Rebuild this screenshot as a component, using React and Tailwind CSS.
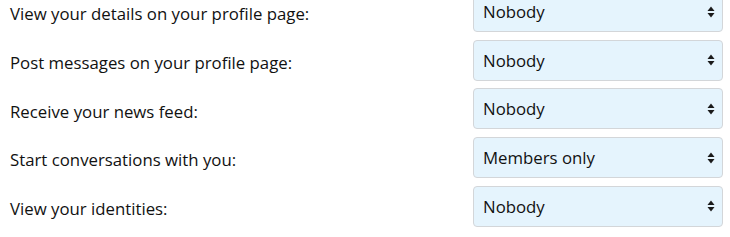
import { useState } from "react";

const rows = [
  { label: "View your details on your profile page:", value: "Nobody" },
  { label: "Post messages on your profile page:", value: "Nobody" },
  { label: "Receive your news feed:", value: "Nobody" },
  { label: "Start conversations with you:", value: "Members only" },
  { label: "View your identities:", value: "Nobody" },
];

const options = ["Everyone", "Members only", "Followed members", "Nobody"];

const PrivacyRow = ({ label, initial }) => {
  const [value, setValue] = useState(initial);

  return (
    <div className="flex items-center justify-between">
      <label className="pt-[5px] text-[16.8px] text-[#111]">{label}</label>
      <div className="relative w-[250px]">
        <select
          value={value}
          onChange={(e) => setValue(e.target.value)}
          className="h-[41px] w-full appearance-none rounded-[4px] border border-[#d3d6d9] bg-[#e5f4fd] pl-[9px] pr-6 text-[16.8px] text-[#111] outline-none"
        >
          {options.map((o) => (
            <option key={o}>{o}</option>
          ))}
        </select>
        <svg
          className="pointer-events-none absolute right-[8px] top-1/2 -translate-y-1/2"
          width="8"
          height="12"
          viewBox="0 0 8 12"
        >
          <path d="M4 0.5 L7.5 5 L0.5 5 Z" fill="#1a1a1a" />
          <path d="M4 11.5 L7.5 7 L0.5 7 Z" fill="#1a1a1a" />
        </svg>
      </div>
    </div>
  );
};

const App = () => {
  return (
    <div
      className="h-[237px] w-[730px] overflow-hidden bg-white"
      style={{ fontFamily: '"Open Sans", "Noto Sans", sans-serif' }}
    >
      <div className="mt-[-9px] flex flex-col gap-[7.7px] pl-[10px] pr-[7px]">
        {rows.map((r) => (
          <PrivacyRow key={r.label} label={r.label} initial={r.value} />
        ))}
      </div>
    </div>
  );
};

export default App;
